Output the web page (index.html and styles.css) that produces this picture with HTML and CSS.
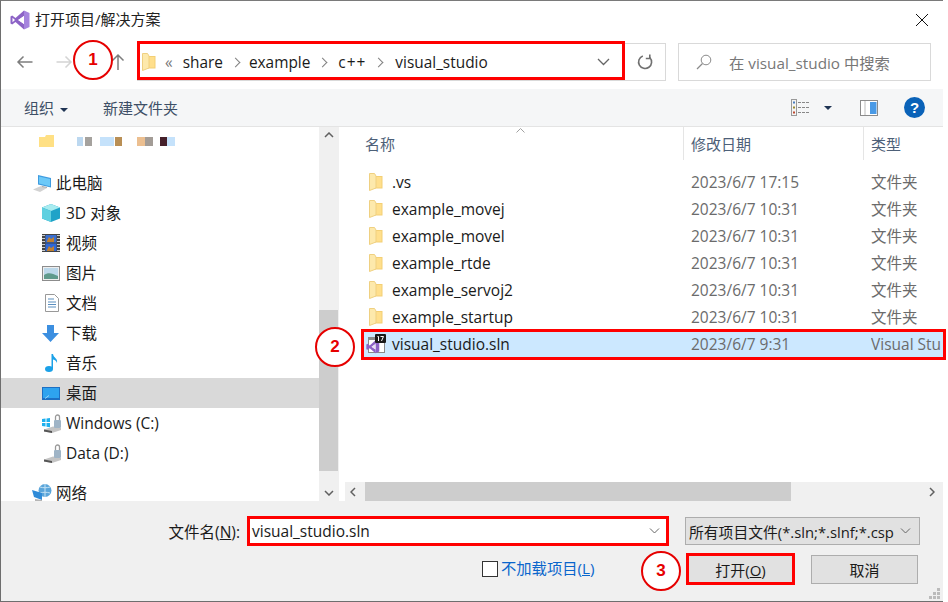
FILE: index.html
```html
<!DOCTYPE html>
<html lang="zh-CN">
<head>
<meta charset="utf-8">
<title>打开项目/解决方案</title>
<link rel="stylesheet" href="styles.css">
</head>
<body>
<svg class="defs" width="0" height="0">
  <defs>
    <symbol id="fold-file" viewBox="0 0 14 18">
      <path d="M5 3h8.500v12.500H5z" fill="#f3cf74"/>
      <path d="M6 4h6.500v10.500H6z" fill="#ffdf8c"/>
      <path d="M.5 .5h5l1.500 2.500v12L.5 17.500z" fill="#fde9ac" stroke="#efd081"/>
    </symbol>
  </defs>
</svg>
<main class="window">
  <header class="titlebar">
    <svg class="vs-logo" width="20" height="20" viewBox="0 0 20 20"><path d="M14 .5 5.500 8 2.200 5.500.5 6.500v7l1.700 1L5.500 12l8.500 7.500v-5.500L8.200 10 14 6z" fill="#8c62c6"/><path d="M2.500 7.700 5 10l-2.500 2.300z" fill="#fff"/><path d="M14 .5l5.500 2.500v14L14 19.500z" fill="#a583de"/><path d="M14 6v8l-5.800-4z" fill="#fff"/></svg>
    <span class="title">打开项目/解决方案</span>
    <svg class="close" width="12" height="12" viewBox="0 0 12 12"><path d="M0 0l12 12M12 0L0 12" stroke="#111" stroke-width="1"/></svg>
  </header>

  <nav class="navbar">
    <svg class="nav-ico" width="18" height="14" viewBox="0 0 18 14"><path d="M16.500 7H2M7.500 1.500 2 7l5.500 5.500" fill="none" stroke="#7d7d7d" stroke-width="1.500"/></svg>
    <svg class="nav-ico fwd" width="18" height="14" viewBox="0 0 18 14"><path d="M1.500 7H16M10.500 1.500 16 7l-5.500 5.500" fill="none" stroke="#d4d4d4" stroke-width="1.500"/></svg>
    <svg class="nav-ico up" width="14" height="18" viewBox="0 0 14 18"><path d="M7 17V2M1.500 7.500 7 2l5.500 5.500" fill="none" stroke="#7d7d7d" stroke-width="1.500"/></svg>
    <div class="addr">
      <svg class="addr-folder" width="14" height="18"><use href="#fold-file"/></svg>
      <span class="crumb-more">«</span>
      <span>share</span><i class="chev"></i>
      <span>example</span><i class="chev"></i>
      <span class="cpp">c++</span><i class="chev"></i>
      <span class="last">visual_studio</span>
      <svg class="addr-drop" width="13" height="8" viewBox="0 0 13 8"><path d="M1 1l5.500 5.500L12 1" fill="none" stroke="#666" stroke-width="1.300"/></svg>
    </div>
    <div class="refresh">
      <svg width="16" height="16" viewBox="0 0 16 16"><path d="M5.800 1.900A6.500 6.500 0 1 0 12.800 3.500" fill="none" stroke="#707070" stroke-width="1.600"/><path d="M12.800 .5v4h-4" fill="none" stroke="#707070" stroke-width="1.600"/></svg>
    </div>
    <div class="search">
      <svg width="16" height="16" viewBox="0 0 16 16"><circle cx="10" cy="6" r="4.800" fill="none" stroke="#8a8a8a"/><path d="M6.500 9.500 1 15" stroke="#8a8a8a" stroke-width="1.200"/></svg>
      <span>在 visual_studio 中搜索</span>
    </div>
  </nav>

  <div class="toolbar">
    <span class="tool">组织<i class="caret"></i></span>
    <span class="tool new">新建文件夹</span>
    <span class="tool-right">
      <svg width="19" height="17" viewBox="0 0 19 17"><rect x=".5" y=".5" width="5" height="16" fill="#f4f4f4" stroke="#999"/><rect x="2" y="2.500" width="2" height="2" fill="#4a7fc0"/><rect x="2" y="7.500" width="2" height="2" fill="#9a8a30"/><rect x="2" y="12.500" width="2" height="2" fill="#c04a30"/><path d="M7 3.500h12M7 8.500h12M7 13.500h12" stroke="#888" stroke-dasharray="3 1"/></svg>
      <i class="caret view"></i>
      <svg class="pane" width="18" height="16" viewBox="0 0 18 16"><rect x=".5" y=".5" width="17" height="15" fill="#fff" stroke="#8b8b8b"/><rect x="10" y="2" width="6.500" height="12" fill="#4a9ae6"/><path d="M5 1v14" stroke="#bbb"/></svg>
      <span class="help">?</span>
    </span>
  </div>

  <div class="content">
    <aside class="tree">
      <div class="tree-list">
        <div class="blur-row">
          <svg width="16" height="12" viewBox="0 0 16 12"><path d="M0 2h6l1-2h8v12H0z" fill="#ffe084"/></svg>
          <i class="b1"></i><i class="b2"></i><i class="b3"></i><i class="b4"></i><i class="b5"></i><i class="b6"></i><i class="b7"></i><i class="b8"></i>
        </div>
        <div class="row top first">
          <svg width="21" height="18" viewBox="0 0 21 18"><path d="M6 1l13 3v9.500L6 10.500z" fill="#3f9ce0"/><path d="M7 2.400l11 2.500v7.400L7 9.500z" fill="#6cc9f8"/><path d="M1 15.500l8-3.500 6 2-7 4z" fill="#d2d2d2"/><path d="M10 12l5 1v1l-5-1z" fill="#aaa"/></svg>
          <span>此电脑</span>
        </div>
        <div class="row">
          <svg width="18" height="18" viewBox="0 0 18 18"><path d="M9 0l9 3.500v11L9 18 0 14.500v-11z" fill="#1fa3c8"/><path d="M9 0l9 3.500L9 7 0 3.500z" fill="#a8ecf0"/><path d="M0 3.500 9 7v11L0 14.500z" fill="#5fd0e0"/></svg>
          <span>3D 对象</span>
        </div>
        <div class="row">
          <svg width="18" height="18" viewBox="0 0 18 18"><rect width="18" height="18" fill="#444"/><path d="M0 1.500h3M0 4.500h3M0 7.500h3M0 10.500h3M0 13.500h3M0 16.500h3M15 1.500h3M15 4.500h3M15 7.500h3M15 10.500h3M15 13.500h3M15 16.500h3" stroke="#ccc"/><rect x="3.500" y="1" width="11" height="7.500" fill="#3a6fd0"/><rect x="3.500" y="9.500" width="11" height="7.500" fill="#2f68d8"/><path d="M5 7l2-4 2 2 3-2v5H5zM5 16l2-4 2 2 3-2v5H5z" fill="#c08030"/></svg>
          <span>视频</span>
        </div>
        <div class="row">
          <svg width="18" height="15" viewBox="0 0 18 15"><rect x=".5" y=".5" width="17" height="14" fill="#eee" stroke="#8c8c8c"/><rect x="2" y="2" width="14" height="11" fill="#bcd8ea"/><path d="M2 9c4-3 8-2 14 1v3H2z" fill="#5f9a8c"/></svg>
          <span>图片</span>
        </div>
        <div class="row">
          <svg class="doc" width="16" height="18" viewBox="0 0 16 18"><path d="M1.500.5h9l4 4v13h-13z" fill="#fff" stroke="#999"/><path d="M4 5h6M4 8h8M4 10.500h8M4 13h8" stroke="#5b8fbf"/></svg>
          <span>文档</span>
        </div>
        <div class="row">
          <svg width="17" height="17" viewBox="0 0 17 17"><path d="M5 0h7v8h5l-8.500 9L0 8h5z" fill="#3c8fe0"/></svg>
          <span>下载</span>
        </div>
        <div class="row">
          <svg width="18" height="18" viewBox="0 0 18 18"><ellipse cx="7" cy="15" rx="4" ry="3" fill="#1ba1e8"/><path d="M9.500 0H11c.5 4 5 4 4 9-1-3-3-3.500-4-3.500V15H9.500z" fill="#1ba1e8"/></svg>
          <span>音乐</span>
        </div>
        <div class="row selected">
          <svg width="18" height="13" viewBox="0 0 18 13"><rect width="18" height="13" fill="#1d6fc4"/><rect x="1" y="1" width="16" height="10" fill="#2ea3ef"/><path d="M3 11.500l4-3" stroke="#9ad6fa"/></svg>
          <span>桌面</span>
        </div>
        <div class="row">
          <svg width="20" height="19" viewBox="0 0 20 19"><path d="M0 5l3.500-.5v3.500H0zM4.500 4.400l3.500-.5v4.100H4.500zM0 9h3.500v3.500L0 12zM4.500 9H8v4.200l-3.500-.5z" fill="#1fb0ee"/><path d="M2 15.500l9-3 8 1.500v2l-9 3-8-1.500z" fill="#c4c4c4"/><path d="M2 15.500l8 1.500v2l-8-1.500z" fill="#555"/><rect x="12" y="6" width="7" height="8" rx="1" fill="#9fb4c6"/><path d="M13.500 6V3a2 2 0 0 1 4 0v3" fill="none" stroke="#9a9a9a" stroke-width="1.300"/></svg>
          <span>Windows (C:)</span>
        </div>
        <div class="row">
          <svg width="20" height="19" viewBox="0 0 20 19"><path d="M2 15.500l9-3 8 1.500v2l-9 3-8-1.500z" fill="#c4c4c4"/><path d="M2 15.500l8 1.500v2l-8-1.500z" fill="#555"/><rect x="12" y="6" width="7" height="8" rx="1" fill="#9fb4c6"/><path d="M13.500 6V3a2 2 0 0 1 4 0v3" fill="none" stroke="#9a9a9a" stroke-width="1.300"/></svg>
          <span>Data (D:)</span>
        </div>
        <div class="row top net">
          <svg width="20" height="18" viewBox="0 0 20 18"><circle cx="13" cy="6.500" r="6.500" fill="#5aa5da"/><path d="M8 3c3 1 7 1 10 0M13 0v13M8 9c3-1 7-1 10 0" stroke="#c4e2f4" fill="none"/><path d="M0 6l10 3v7L2 13z" fill="#2f8bd8"/><path d="M3 15l7 1v2l-7-1z" fill="#b5b5b5"/></svg>
          <span>网络</span>
        </div>
      </div>
      <div class="vscroll">
        <svg class="arrow-v" width="10" height="6" viewBox="0 0 10 6"><path d="M1 5l4-4 4 4" fill="none" stroke="#606060" stroke-width="1.500"/></svg>
        <div class="vtrack"><div class="vthumb"></div></div>
        <svg class="arrow-v" width="10" height="6" viewBox="0 0 10 6"><path d="M1 1l4 4 4-4" fill="none" stroke="#606060" stroke-width="1.500"/></svg>
      </div>
    </aside>

    <section class="files">
      <div class="headers">
        <span class="h-name">名称</span>
        <span class="h-date">修改日期</span>
        <span class="h-type">类型</span>
        <svg class="sort" width="9" height="5" viewBox="0 0 9 5"><path d="M.5 4.500l4-4 4 4" fill="none" stroke="#a0a0a0"/></svg>
      </div>
      <div class="file-list">
        <div class="frow"><svg width="14" height="18"><use href="#fold-file"/></svg><span class="n">.vs</span><span class="d">2023/6/7 17:15</span><span class="t">文件夹</span></div>
        <div class="frow"><svg width="14" height="18"><use href="#fold-file"/></svg><span class="n">example_movej</span><span class="d">2023/6/7 10:31</span><span class="t">文件夹</span></div>
        <div class="frow"><svg width="14" height="18"><use href="#fold-file"/></svg><span class="n">example_movel</span><span class="d">2023/6/7 10:31</span><span class="t">文件夹</span></div>
        <div class="frow"><svg width="14" height="18"><use href="#fold-file"/></svg><span class="n">example_rtde</span><span class="d">2023/6/7 10:31</span><span class="t">文件夹</span></div>
        <div class="frow"><svg width="14" height="18"><use href="#fold-file"/></svg><span class="n">example_servoj2</span><span class="d">2023/6/7 10:31</span><span class="t">文件夹</span></div>
        <div class="frow"><svg width="14" height="18"><use href="#fold-file"/></svg><span class="n">example_startup</span><span class="d">2023/6/7 10:31</span><span class="t">文件夹</span></div>
        <div class="frow sel">
          <svg class="sln" width="20" height="20" viewBox="0 0 20 20"><rect x="2.500" y="3.500" width="16" height="15" fill="#fff" stroke="#8a8a8a"/><path d="M3 4h15v2H3z" fill="#8a8a8a"/><g transform="translate(0 6) scale(.68)"><path d="M14 .5 5.500 8 2.200 5.500.5 6.500v7l1.700 1L5.500 12l8.500 7.500v-5.500L8.200 10 14 6z" fill="#8c62c6"/><path d="M14 .5l5.500 2.500v14L14 19.500z" fill="#8c62c6"/><path d="M14 6v8l-5.800-4z" fill="#e6dcf4"/></g><rect x="9" y="0" width="11" height="9" rx="1" fill="#1a1a1a"/><path d="M11.500 2.500h1v4.500M14.500 2.500h3l-2 4.500" fill="none" stroke="#fff"/></svg>
          <span class="n">visual_studio.sln</span><span class="d">2023/6/7 9:31</span><span class="t">Visual Stu</span>
        </div>
      </div>
      <div class="hscroll">
        <svg width="6" height="10" viewBox="0 0 6 10"><path d="M5 1L1 5l4 4" fill="none" stroke="#606060" stroke-width="1.500"/></svg>
        <div class="htrack"><div class="hthumb"></div></div>
        <svg width="6" height="10" viewBox="0 0 6 10"><path d="M1 1l4 4-4 4" fill="none" stroke="#606060" stroke-width="1.500"/></svg>
      </div>
    </section>
  </div>

  <footer class="footer">
    <div class="f-row">
      <label class="f-label">文件名(<u>N</u>):</label>
      <div class="combo name"><span>visual_studio.sln</span><svg width="11" height="6" viewBox="0 0 11 6"><path d="M1 .5l4.500 4.500L10 .5" fill="none" stroke="#666"/></svg></div>
      <div class="combo filter"><span>所有项目文件(*.sln;*.slnf;*.csp</span><svg width="11" height="6" viewBox="0 0 11 6"><path d="M1 .5l4.500 4.500L10 .5" fill="none" stroke="#666"/></svg></div>
    </div>
    <div class="f-row second">
      <span class="check"></span>
      <span class="link">不加载项目(<u>L</u>)</span>
      <button class="btn open">打开(<u>O</u>)</button>
      <button class="btn cancel">取消</button>
    </div>
    <svg class="grip" width="12" height="12" viewBox="0 0 12 12"><path d="M8 0h3v3H8zM4 4h3v3H4zM8 4h3v3H8zM0 8h3v3H0zM4 8h3v3H4zM8 8h3v3H8z" fill="#bbb"/></svg>
  </footer>
</main>

<div class="mark box-addr"></div>
<div class="mark box-row"></div>
<div class="mark box-name"></div>
<div class="mark box-open"></div>
<div class="badge b-1">1</div>
<div class="badge b-2">2</div>
<div class="badge b-3">3</div>
</body>
</html>
```
FILE: styles.css
```css
* { box-sizing: border-box; }
html, body { margin: 0; padding: 0; background: #fff; }
body {
  position: relative;
  width: 948px;
  height: 602px;
  overflow: hidden;
  font-family: "Open Sans", "Noto Sans CJK SC", sans-serif;
  font-size: 15px;
  color: #1a1a1a;
}
.defs { position: absolute; }
svg { display: block; flex: none; }

.window {
  width: 943px;
  height: 602px;
  border-top: 1px solid #7a7a7a;
  border-left: 1px solid #6e6e6e;
  border-bottom: 1px solid #6e6e6e;
  display: flex;
  flex-direction: column;
  background: #fff;
}

.titlebar {
  height: 37px;
  flex: none;
  display: flex;
  align-items: center;
  padding: 0 15px 0 9px;
}
.title { margin-left: 5px; font-size: 15px; line-height: 20px; margin-top: -2px; color: #222; }
.close { margin-left: auto; }

.navbar {
  height: 51px;
  flex: none;
  display: flex;
  align-items: flex-start;
  padding-top: 5px;
}
.nav-ico { margin: 12px 0 0 15px; }
.nav-ico.fwd { margin-left: 21px; }
.nav-ico.up { margin: 10px 0 0 38px; }
.addr {
  width: 487px;
  height: 38px;
  margin-left: 12px;
  display: flex;
  align-items: center;
  padding-left: 4px;
  border: 1px solid #d9d9d9;
  border-right: 0;
  font-size: 15.400px;
}
.addr-folder { margin-right: 9px; }
.crumb-more { color: #777; margin-right: 10px; }
.chev {
  width: 7px; height: 7px;
  margin: 0 10px 0 9px;
  border-top: 1.500px solid #808080;
  border-right: 1.500px solid #808080;
  transform: rotate(45deg);
}
.cpp { letter-spacing: 1px; margin-left: 2px; }
.last { margin-left: 3px; }
.addr-drop { margin: 0 14px 0 auto; }
.refresh {
  width: 42px;
  height: 38px;
  border: 1px solid #d9d9d9;
  display: flex;
  align-items: center;
  justify-content: center;
}
.search {
  width: 253px;
  height: 38px;
  margin-left: 12px;
  border: 1px solid #d9d9d9;
  display: flex;
  align-items: center;
  padding-left: 17px;
  gap: 17px;
  color: #777;
  font-size: 15.300px;
}

.toolbar {
  height: 38px;
  flex: none;
  background: #f5f6f7;
  border-bottom: 1px solid #e4e4e4;
  display: flex;
  align-items: center;
  padding-left: 23px;
  color: #3d4f66;
  font-size: 15px;
}
.caret {
  display: inline-block;
  width: 0; height: 0;
  margin-left: 6px;
  vertical-align: 2px;
  border-left: 4px solid transparent;
  border-right: 4px solid transparent;
  border-top: 4px solid #1f3454;
}
.new { margin-left: 35px; }
.tool-right {
  margin-left: auto;
  display: flex;
  align-items: center;
  padding-right: 18px;
}
.caret.view { margin: 0 0 0 14px; }
.pane { margin-left: 28px; }
.help {
  width: 21px; height: 21px;
  margin-left: 26px;
  border-radius: 50%;
  background: #0a62b8;
  color: #fff;
  font: bold 15px/21px "Liberation Sans", sans-serif;
  text-align: center;
}

.content { flex: 1; min-height: 0; display: flex; }

.tree { width: 338px; flex: none; display: flex; }
.tree-list { flex: 1; min-width: 0; overflow: hidden; font-size: 15.500px; }
.blur-row { height: 28px; display: flex; align-items: center; padding-left: 38px; }
.blur-row i { height: 9px; display: block; }
.blur-row .b1 { margin-left: 22px; width: 6px; background: #bcd8f0; }
.blur-row .b2 { margin-left: 2px; width: 7px; background: #a5a29e; }
.blur-row .b3 { margin-left: 8px; width: 14px; background: #c5e2fb; }
.blur-row .b4 { margin-left: 1px; width: 7px; background: #b98f55; }
.blur-row .b5 { margin-left: 15px; width: 8px; background: #ecbf90; }
.blur-row .b6 { width: 8px; background: #a39c96; }
.blur-row .b7 { margin-left: 7px; width: 7px; background: #45202a; }
.blur-row .b8 { width: 8px; background: #c5e2fb; }

.row {
  height: 30px;
  display: flex;
  align-items: center;
  padding-left: 41px;
  position: relative;
}
.row span { position: absolute; left: 65px; line-height: 16px; }
.row.top { padding-left: 31px; }
.row.top span { left: 55px; }
.row.first { margin-top: 13px; }
.row.net { margin-top: 10px; }
.row.net span { line-height: 14px; }
.row.selected { background: #d9d9d9; }
.row .doc { margin-left: 2px; }

.vscroll {
  width: 20px;
  background: #f0f0f0;
  display: flex;
  flex-direction: column;
  align-items: center;
}
.vscroll .arrow-v { margin: 5px 0; }
.vtrack { flex: 1; width: 100%; padding-top: 167px; }
.vthumb { width: 19px; height: 161px; background: #cdcdcd; }

.files {
  flex: 1;
  min-width: 0;
  margin-left: 6px;
  display: flex;
  flex-direction: column;
  position: relative;
}
.headers {
  height: 33px;
  flex: none;
  display: grid;
  grid-template-columns: 338px 180px 1fr;
  align-items: center;
  color: #4d6078;
  font-size: 15px;
}
.h-name { padding-left: 20px; }
.h-date, .h-type { padding-left: 7px; border-left: 1px solid #e5e5e5; height: 100%; display: flex; align-items: center; }
.sort { position: absolute; left: 171px; top: 1px; }

.file-list { flex: 1; padding-top: 8px; overflow: hidden; }
.frow {
  height: 27px;
  display: grid;
  grid-template-columns: 23px 299px 180px 1fr;
  align-items: center;
  padding-left: 24px;
  font-size: 15.500px;
}
.frow .d, .frow .t { color: #6b6b6b; white-space: nowrap; }
.frow .n { white-space: nowrap; }
.frow.sel {
  margin-left: 17px;
  padding-left: 4px;
  grid-template-columns: 26px 299px 180px 1fr;
  background: #cce8ff;
}
.frow.sel .t { overflow: hidden; }

.hscroll {
  height: 19px;
  flex: none;
  background: #f0f0f0;
  display: flex;
  align-items: center;
  padding: 0 8px 0 5px;
}
.htrack { flex: 1; height: 100%; padding-left: 9px; }
.hthumb { width: 426px; height: 100%; background: #cdcdcd; }

.footer {
  height: 100px;
  flex: none;
  background: #f0f0f0;
  position: relative;
  padding-top: 16px;
}
.f-row { display: flex; align-items: center; height: 28px; }
.f-label { width: 239px; text-align: right; font-size: 15.500px; }
.combo {
  height: 28px;
  display: flex;
  align-items: center;
  justify-content: space-between;
  padding: 0 8px 0 4px;
}
.combo span { white-space: nowrap; }
.combo.name { width: 420px; margin-left: 8px; background: #fff; font-size: 15.500px; }
.combo.filter {
  width: 235px;
  margin-left: 17px;
  padding-left: 3px;
  background: #e1e1e1;
  border: 1px solid #adadad;
  font-size: 14.800px;
}
.second { margin-top: 10px; height: 29px; align-items: flex-start; padding-right: 25px; }
.check {
  width: 16px; height: 16px;
  margin: 6px 0 0 481px;
  background: #fff;
  border: 1px solid #333;
}
.link { margin: 3px 0 0 3px; line-height: 20px; color: #0a66cc; font-size: 15.300px; }
.btn {
  height: 29px;
  background: #e1e1e1;
  border: 1px solid #adadad;
  font: 15px "Open Sans", "Noto Sans CJK SC", sans-serif;
  color: #1a1a1a;
  padding: 0;
}
.btn.open { width: 105px; margin-left: auto; }
.btn.cancel { width: 107px; margin-left: 18px; }
.grip { position: absolute; right: 2px; bottom: 1px; }

.mark { position: absolute; border: 3px solid #ff0000; }
.box-addr { left: 137px; top: 41px; width: 488px; height: 39px; }
.box-row { left: 361px; top: 329px; width: 585px; height: 31px; }
.box-name { left: 247px; top: 516px; width: 422px; height: 30px; }
.box-open { left: 686px; top: 553px; width: 109px; height: 32px; }

.badge {
  position: absolute;
  width: 40px; height: 40px;
  border-radius: 50%;
  background: #fff;
  border: 2px solid #e60000;
  color: #e60000;
  font: bold 17px/36px "Liberation Sans", sans-serif;
  text-align: center;
}
.b-1 { left: 73px; top: 40px; }
.b-2 { left: 315px; top: 327px; }
.b-3 { left: 641px; top: 551px; }
```
